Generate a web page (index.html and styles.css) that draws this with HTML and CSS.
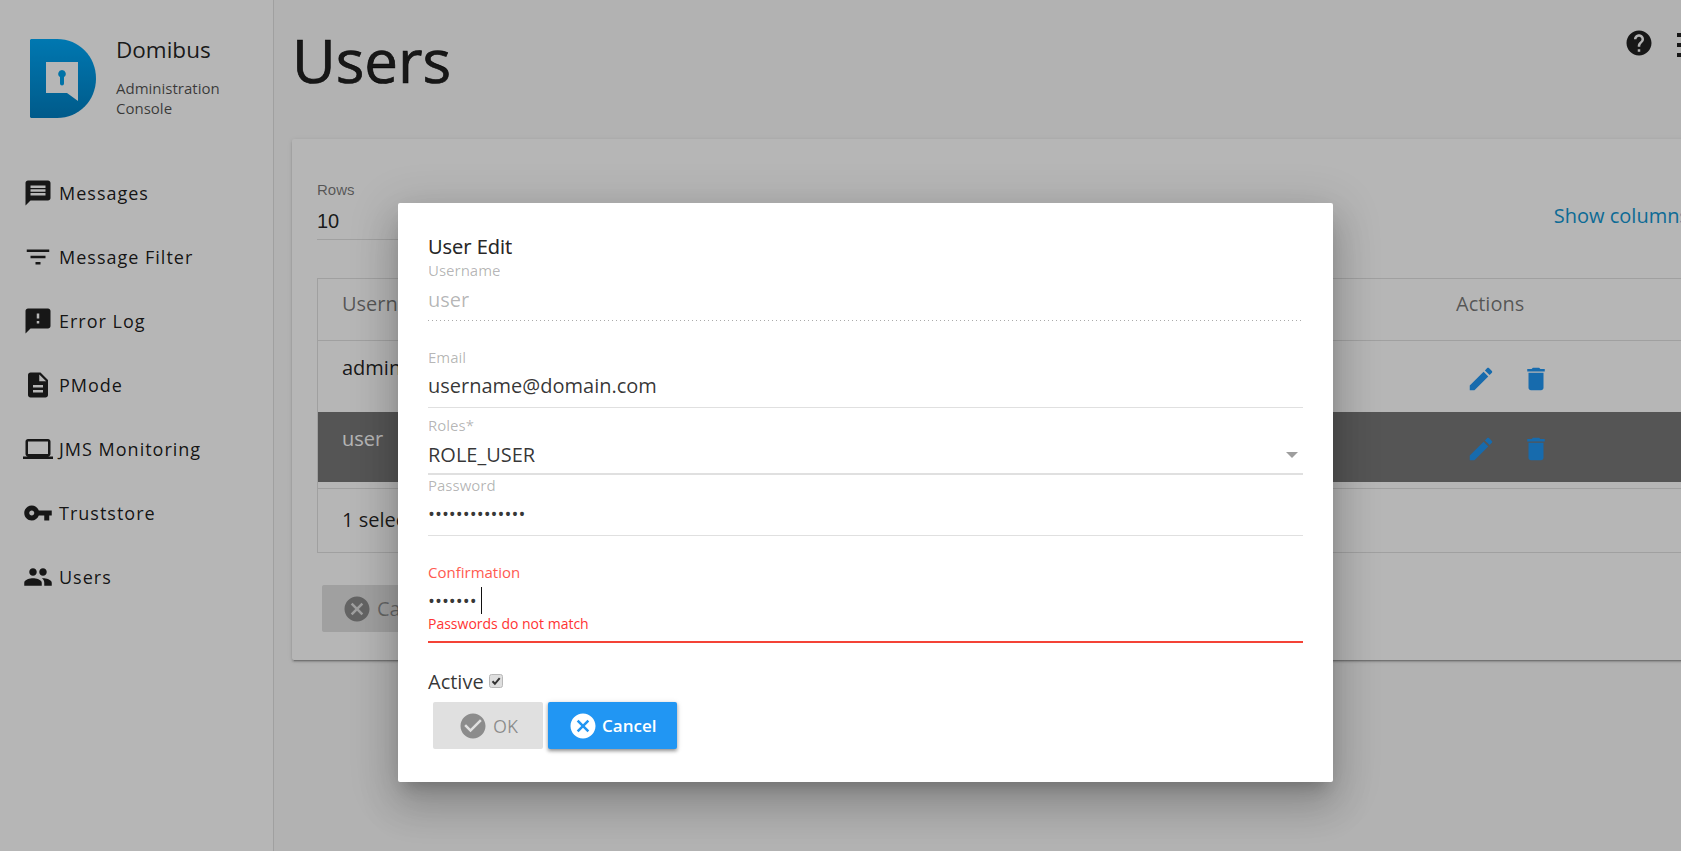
FILE: index.html
```html
<!DOCTYPE html>
<html lang="en">
<head>
<meta charset="utf-8">
<title>Domibus - Users</title>
<link rel="stylesheet" href="styles.css">
</head>
<body>
<div class="app">
  <aside class="sidebar">
    <div class="brand">
      <svg class="logo" viewBox="0 0 66 79">
        <defs><linearGradient id="lg" x1="0" y1="0" x2="0" y2="1"><stop offset="0" stop-color="#00a8f8"/><stop offset="1" stop-color="#007fc2"/></linearGradient></defs>
        <path fill="url(#lg)" d="M1.5 0H27C49 0 66 17.500 66 39.500S49 79 27 79H1.500C.7 79 0 78.300 0 77.500V1.500C0 .7.7 0 1.500 0z"/>
        <path fill="#fff" d="M16 23H48V62L37 54H16z"/>
        <path fill="#00a0ea" d="M32 31a3.800 3.800 0 0 1 2 7v6.500a2 2 0 0 1-4 0V38a3.800 3.800 0 0 1 2-7z"/>
      </svg>
      <div class="brand-text">
        <div class="brand-name">Domibus</div>
        <div class="brand-sub">Administration<br>Console</div>
      </div>
    </div>
    <nav class="nav">
      <a class="nav-item"><svg class="nav-icon" viewBox="0 0 24 24"><path d="M20 2H4c-1.100 0-1.990.9-1.990 2L2 22l4-4h14c1.100 0 2-.9 2-2V4c0-1.100-.9-2-2-2zm-2 12H6v-2h12v2zm0-3H6V9h12v2zm0-3H6V6h12v2z"/></svg>Messages</a>
      <a class="nav-item"><svg class="nav-icon" viewBox="0 0 24 24"><path d="M10 18h4v-2h-4v2zM3 6v2h18V6H3zm3 7h12v-2H6v2z"/></svg>Message Filter</a>
      <a class="nav-item"><svg class="nav-icon" viewBox="0 0 24 24"><path d="M20 2H4c-1.100 0-1.990.9-1.990 2L2 22l4-4h14c1.100 0 2-.9 2-2V4c0-1.100-.9-2-2-2zm-7 12h-2v-2h2v2zm0-4h-2V6h2v4z"/></svg>Error Log</a>
      <a class="nav-item"><svg class="nav-icon" viewBox="0 0 24 24"><path d="M14 2H6c-1.100 0-1.990.9-1.990 2L4 20c0 1.100.89 2 1.990 2H18c1.100 0 2-.9 2-2V8l-6-6zm2 16H8v-2h8v2zm0-4H8v-2h8v2zm-3-5V3.500L18.500 9H13z"/></svg>PMode</a>
      <a class="nav-item"><svg class="nav-icon" viewBox="0 0 24 24"><path d="M20 18c1.100 0 1.990-.9 1.990-2L22 6c0-1.100-.9-2-2-2H4c-1.100 0-2 .9-2 2v10c0 1.100.9 2 2 2H0v2h24v-2h-4zM4 6h16v10H4V6z"/></svg>JMS Monitoring</a>
      <a class="nav-item"><svg class="nav-icon" viewBox="0 0 24 24"><path d="M12.650 10C11.830 7.670 9.610 6 7 6c-3.310 0-6 2.690-6 6s2.690 6 6 6c2.610 0 4.830-1.670 5.650-4H17v4h4v-4h2v-4H12.650zM7 14c-1.100 0-2-.9-2-2s.9-2 2-2 2 .9 2 2-.9 2-2 2z"/></svg>Truststore</a>
      <a class="nav-item"><svg class="nav-icon" viewBox="0 0 24 24"><path d="M16 11c1.660 0 2.990-1.340 2.990-3S17.660 5 16 5c-1.660 0-3 1.340-3 3s1.340 3 3 3zm-8 0c1.660 0 2.990-1.340 2.990-3S9.660 5 8 5C6.340 5 5 6.340 5 8s1.340 3 3 3zm0 2c-2.330 0-7 1.170-7 3.500V19h14v-2.500c0-2.330-4.670-3.500-7-3.500zm8 0c-.29 0-.62.02-.97.05 1.160.84 1.970 1.970 1.970 3.450V19h6v-2.500c0-2.330-4.670-3.500-7-3.500z"/></svg>Users</a>
    </nav>
  </aside>
  <main class="main">
    <header class="topbar">
      <h1 class="title">Users</h1>
      <div class="top-actions">
        <svg class="help" viewBox="0 0 24 24"><path d="M12 2C6.480 2 2 6.480 2 12s4.480 10 10 10 10-4.480 10-10S17.520 2 12 2zm1 17h-2v-2h2v2zm2.070-7.750l-.9.92C13.450 12.900 13 13.500 13 15h-2v-.5c0-1.100.45-2.100 1.170-2.830l1.240-1.260c.37-.36.59-.86.59-1.410 0-1.100-.9-2-2-2s-2 .9-2 2H8c0-2.210 1.790-4 4-4s4 1.790 4 4c0 .88-.36 1.680-.93 2.250z"/></svg>
        <svg class="more" viewBox="0 0 34 30"><rect x="0" y="5" width="8" height="4"/><rect x="0" y="15" width="8" height="4"/><rect x="0" y="25" width="8" height="4"/></svg>
      </div>
    </header>
    <section class="card">
      <div class="filters">
        <div class="rows-select">
          <div class="rows-label">Rows</div>
          <div class="rows-value">10</div>
        </div>
        <a class="show-columns">Show columns</a>
      </div>
      <div class="table">
        <div class="tr th"><div class="td-main">Username</div><div class="td-actions">Actions</div></div>
        <div class="tr row"><div class="td-main">admin</div><div class="td-icons">
          <svg class="act" viewBox="0 0 24 24"><path d="M3 17.250V21h3.750L17.810 9.940l-3.750-3.750L3 17.250zM20.710 7.040c.39-.39.39-1.020 0-1.410l-2.340-2.340c-.39-.39-1.020-.39-1.410 0l-1.830 1.830 3.750 3.750 1.830-1.830z"/></svg>
          <svg class="act" viewBox="0 0 24 24"><path d="M6 19c0 1.100.9 2 2 2h8c1.100 0 2-.9 2-2V7H6v12zM19 4h-3.500l-1-1h-5l-1 1H5v2h14V4z"/></svg>
        </div></div>
        <div class="tr row selected"><div class="td-main">user</div><div class="td-icons">
          <svg class="act" viewBox="0 0 24 24"><path d="M3 17.250V21h3.750L17.810 9.940l-3.750-3.750L3 17.250zM20.710 7.040c.39-.39.39-1.020 0-1.410l-2.340-2.340c-.39-.39-1.020-.39-1.410 0l-1.830 1.830 3.750 3.750 1.830-1.830z"/></svg>
          <svg class="act" viewBox="0 0 24 24"><path d="M6 19c0 1.100.9 2 2 2h8c1.100 0 2-.9 2-2V7H6v12zM19 4h-3.500l-1-1h-5l-1 1H5v2h14V4z"/></svg>
        </div></div>
        <div class="tfoot">1 selected / 2 total</div>
      </div>
      <div class="card-actions">
        <button class="btn btn-disabled card-btn"><svg class="btn-icon" viewBox="0 0 24 24"><path d="M12 2C6.470 2 2 6.470 2 12s4.470 10 10 10 10-4.470 10-10S17.530 2 12 2zm5 13.590L15.590 17 12 13.410 8.410 17 7 15.590 10.590 12 7 8.410 8.410 7 12 10.590 15.590 7 17 8.410 13.410 12 17 15.590z"/></svg>Cancel</button>
      </div>
    </section>
  </main>
</div>
<div class="overlay">
  <div class="dialog">
    <h2 class="dialog-title">User Edit</h2>
    <div class="field f-username disabled">
      <label class="flabel">Username</label>
      <div class="fvalue">user</div>
    </div>
    <div class="field f-email">
      <label class="flabel">Email</label>
      <div class="fvalue">username@domain.com</div>
    </div>
    <div class="field f-roles">
      <label class="flabel">Roles*</label>
      <div class="fvalue select-value">ROLE_USER<span class="caret"></span></div>
    </div>
    <div class="field f-password">
      <label class="flabel">Password</label>
      <div class="fvalue dots">••••••••••••••</div>
    </div>
    <div class="field f-confirm invalid">
      <label class="flabel">Confirmation</label>
      <div class="fvalue dots">•••••••<span class="cursor"></span></div>
      <div class="ferror">Passwords do not match</div>
    </div>
    <div class="active-row"><span>Active</span>
      <svg class="check" viewBox="0 0 14 14"><rect x=".5" y=".5" width="13" height="13" rx="2" fill="#dedede" stroke="#b8b8b8"/><path d="M3.500 7.300l2.400 2.500 4.800-5.600" fill="none" stroke="#333" stroke-width="2"/></svg>
    </div>
    <div class="dialog-actions">
      <button class="btn btn-disabled ok"><svg class="btn-icon" viewBox="0 0 24 24"><path d="M12 2C6.480 2 2 6.480 2 12s4.480 10 10 10 10-4.480 10-10S17.520 2 12 2zm-2 15l-5-5 1.410-1.410L10 14.170l7.590-7.590L19 8l-9 9z"/></svg>OK</button>
      <button class="btn btn-primary cancel"><svg class="btn-icon" viewBox="0 0 24 24"><path d="M12 2C6.470 2 2 6.470 2 12s4.470 10 10 10 10-4.470 10-10S17.530 2 12 2zm5 13.590L15.590 17 12 13.410 8.410 17 7 15.590 10.590 12 7 8.410 8.410 7 12 10.590 15.590 7 17 8.410 13.410 12 17 15.590z"/></svg>Cancel</button>
    </div>
  </div>
</div>
</body>
</html>
```
FILE: styles.css
```css
* { box-sizing: border-box; }
html, body { margin: 0; height: 851px; overflow: hidden; background: #fafafa; }
body { font-family: "Open Sans", sans-serif; color: rgba(0,0,0,.87); width: 1681px; position: relative; }
.app { display: flex; width: 1731px; height: 851px; }

.sidebar { width: 274px; flex: none; background: #fff; border-right: 1px solid #e0e0e0; padding-top: 39px; }
.brand { display: flex; padding-left: 30px; gap: 20px; height: 122px; }
.logo { width: 66px; height: 79px; flex: none; }
.brand-name { font-size: 22.500px; line-height: 28px; margin-top: -3px; }
.brand-sub { font-size: 15px; line-height: 20px; margin-top: 14px; color: rgba(0,0,0,.7); }
.nav { display: flex; flex-direction: column; }
.nav-item { display: flex; align-items: center; height: 64px; padding-left: 23px; gap: 6px; font-size: 18px; letter-spacing: 1px; color: rgba(0,0,0,.9); }
.nav-icon { width: 30px; height: 30px; fill: #212121; flex: none; }

.main { flex: 1; background: #fafafa; padding: 0 20px 0 18px; min-width: 0; }
.topbar { display: flex; justify-content: space-between; height: 139px; }
.title { margin: 22px 0 0; font-size: 60px; line-height: 76px; font-weight: 400; -webkit-text-stroke: .7px currentColor; color: rgba(0,0,0,.87); }
.top-actions { display: flex; align-items: flex-start; padding-top: 28px; gap: 23px; }
.help { width: 30px; height: 30px; fill: #212121; }
.more { width: 34px; height: 30px; fill: #212121; }

.card { background: #fff; height: 521px; border-radius: 2px; padding: 40px 25px 0; box-shadow: 0 2px 2px rgba(0,0,0,.14), 0 3px 1px -2px rgba(0,0,0,.2), 0 1px 5px rgba(0,0,0,.12); }
.filters { display: flex; justify-content: space-between; height: 99px; }
.rows-select { width: 300px; height: 61px; border-bottom: 1px solid #e0e0e0; font-family: "Liberation Sans", sans-serif; }
.rows-label { font-size: 15px; line-height: 18px; margin-top: 2px; color: rgba(0,0,0,.54); }
.rows-value { font-size: 20px; line-height: 24px; margin-top: 10px; color: rgba(0,0,0,.87); }
.show-columns { font-size: 20px; line-height: 26px; color: #1296d2; margin: 24px -3px 0 0; }

.table { width: 1392px; border: 1px solid #e0e0e0; border-right: 0; }
.tr { display: flex; justify-content: space-between; padding-left: 24px; font-size: 20px; }
.th { height: 62px; align-items: center; color: rgba(0,0,0,.54); border-bottom: 1px solid #e0e0e0; padding-bottom: 12px; }
.row { height: 71px; padding-top: 13px; color: rgba(0,0,0,.87); }
.row.selected { height: 70px; background: #777; color: #fff; }
.td-actions { width: 253px; }
.td-icons { display: flex; gap: 25px; width: 234px; padding-top: 10px; }
.act { width: 30px; height: 30px; fill: #2196f3; margin-left: -9px; }
.td-icons .act + .act { margin-left: 0; }
.selected .td-icons { padding-top: 9px; }
.tfoot { margin-top: 6px; height: 64px; border-top: 1px solid #e0e0e0; padding-left: 24px; font-size: 20px; line-height: 62px; color: rgba(0,0,0,.87); }

.card-actions { padding: 32px 0 0 5px; }
.btn { display: inline-flex; align-items: center; height: 47px; border: 0; border-radius: 2px; font-family: "Open Sans", sans-serif; font-size: 18px; padding: 0; }
.btn-disabled { background: #e0e0e0; color: rgba(0,0,0,.38); }
.btn-primary { background: #2196f3; color: #fff; font-size: 17px; font-weight: 600; box-shadow: 0 2px 3px 1px rgba(0,0,0,.2), 0 3px 2px -2px rgba(0,0,0,.2), 0 1px 6px rgba(0,0,0,.12); }
.btn-icon { width: 30px; height: 30px; flex: none; fill: currentColor; }
.card-btn { width: 140px; padding-left: 20px; gap: 5px; font-size: 20px; }
.card-btn .btn-icon { fill: #8c8c8c; }

.overlay { position: absolute; left: 0; top: 0; width: 1731px; height: 851px; background: rgba(0,0,0,.288); display: flex; justify-content: center; align-items: flex-start; padding-top: 203px; }
.dialog { width: 935px; height: 579px; background: #fff; border-radius: 2px; padding: 30px 30px 0; box-shadow: 0 11px 15px -7px rgba(0,0,0,.2), 0 24px 38px 3px rgba(0,0,0,.14), 0 9px 46px 8px rgba(0,0,0,.12); }
.dialog-title { margin: 0; font-size: 20px; line-height: 28px; font-weight: 400; -webkit-text-stroke: .2px currentColor; }

.field { display: flow-root; position: relative; width: 875px; border-bottom: 1px solid #e0e0e0; }
.flabel { display: block; font-size: 15px; line-height: 18px; margin: -1px 0 1px; color: rgba(0,0,0,.3); }
.fvalue { font-size: 20px; line-height: 26px; color: rgba(0,0,0,.8); }
.disabled { border-bottom: 0; background: repeating-linear-gradient(90deg, #aaa 0 1px, transparent 1px 4px) left bottom / 100% 1px no-repeat; width: 873px; }
.disabled .flabel { margin: 0; }
.disabled .fvalue { color: rgba(0,0,0,.3); }
.f-username { height: 60px; }
.f-username .fvalue { margin-top: 8px; }
.f-email { height: 59px; margin-top: 28px; }
.f-email .fvalue { margin-top: 7px; }
.f-roles { height: 58px; margin-top: 9px; border-bottom: 2px solid #e0e0e0; }
.f-roles .fvalue { margin-top: 8px; }
.select-value { display: flex; justify-content: space-between; align-items: center; padding-right: 5px; }
.caret { width: 0; height: 0; border-left: 6px solid transparent; border-right: 6px solid transparent; border-top: 6px solid rgba(0,0,0,.38); }
.f-password { height: 59px; margin-top: 2px; }
.f-password .fvalue { margin-top: 7px; }
.dots { display: flex; align-items: center; font-size: 18.500px; }
.f-confirm { height: 79px; margin-top: 28px; border-bottom: 2px solid #f44336; }
.f-confirm .flabel { color: #ff5a50; }
.f-confirm .fvalue { margin-top: 6px; }
.cursor { display: inline-block; width: 1px; height: 27px; background: #111; margin-left: 4px; }
.ferror { font-size: 14px; line-height: 18px; color: #f33; margin-top: 1px; }

.active-row { display: flex; align-items: center; height: 38px; margin-top: 19px; font-size: 20px; color: rgba(0,0,0,.8); }
.check { width: 14px; height: 14px; margin: 0 0 1px 5px; }
.dialog-actions { display: flex; gap: 5px; padding-left: 5px; margin-top: 2px; }
.ok { width: 110px; padding-left: 25px; gap: 5px; font-weight: 400; }
.ok .btn-icon { fill: #8c8c8c; }
.cancel { width: 129px; padding-left: 20px; gap: 4px; }
```
